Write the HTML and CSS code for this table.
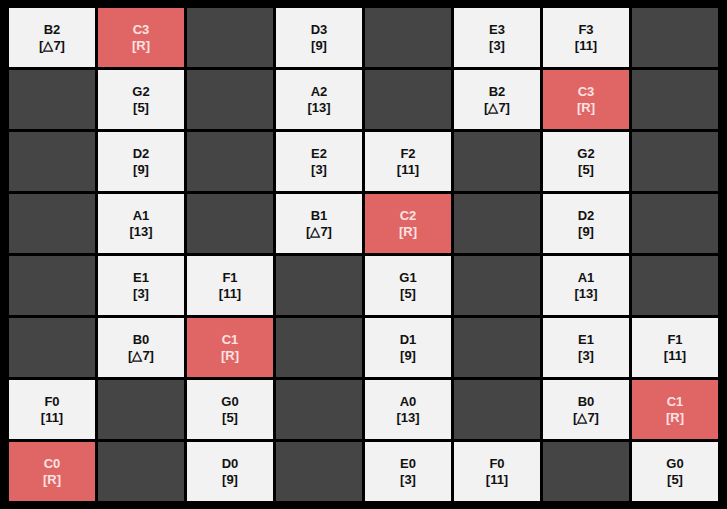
FILE: index.html
```html
<!DOCTYPE html>
<html>
<head>
<meta charset="utf-8">
<link rel="stylesheet" href="styles.css">
</head>
<body>
<div class="grid">
  <div class="cell light"><b>B2</b><span>[△7]</span></div>
  <div class="cell red"><b>C3</b><span>[R]</span></div>
  <div class="cell dark"></div>
  <div class="cell light"><b>D3</b><span>[9]</span></div>
  <div class="cell dark"></div>
  <div class="cell light"><b>E3</b><span>[3]</span></div>
  <div class="cell light"><b>F3</b><span>[11]</span></div>
  <div class="cell dark"></div>

  <div class="cell dark"></div>
  <div class="cell light"><b>G2</b><span>[5]</span></div>
  <div class="cell dark"></div>
  <div class="cell light"><b>A2</b><span>[13]</span></div>
  <div class="cell dark"></div>
  <div class="cell light"><b>B2</b><span>[△7]</span></div>
  <div class="cell red"><b>C3</b><span>[R]</span></div>
  <div class="cell dark"></div>

  <div class="cell dark"></div>
  <div class="cell light"><b>D2</b><span>[9]</span></div>
  <div class="cell dark"></div>
  <div class="cell light"><b>E2</b><span>[3]</span></div>
  <div class="cell light"><b>F2</b><span>[11]</span></div>
  <div class="cell dark"></div>
  <div class="cell light"><b>G2</b><span>[5]</span></div>
  <div class="cell dark"></div>

  <div class="cell dark"></div>
  <div class="cell light"><b>A1</b><span>[13]</span></div>
  <div class="cell dark"></div>
  <div class="cell light"><b>B1</b><span>[△7]</span></div>
  <div class="cell red"><b>C2</b><span>[R]</span></div>
  <div class="cell dark"></div>
  <div class="cell light"><b>D2</b><span>[9]</span></div>
  <div class="cell dark"></div>

  <div class="cell dark"></div>
  <div class="cell light"><b>E1</b><span>[3]</span></div>
  <div class="cell light"><b>F1</b><span>[11]</span></div>
  <div class="cell dark"></div>
  <div class="cell light"><b>G1</b><span>[5]</span></div>
  <div class="cell dark"></div>
  <div class="cell light"><b>A1</b><span>[13]</span></div>
  <div class="cell dark"></div>

  <div class="cell dark"></div>
  <div class="cell light"><b>B0</b><span>[△7]</span></div>
  <div class="cell red"><b>C1</b><span>[R]</span></div>
  <div class="cell dark"></div>
  <div class="cell light"><b>D1</b><span>[9]</span></div>
  <div class="cell dark"></div>
  <div class="cell light"><b>E1</b><span>[3]</span></div>
  <div class="cell light"><b>F1</b><span>[11]</span></div>

  <div class="cell light"><b>F0</b><span>[11]</span></div>
  <div class="cell dark"></div>
  <div class="cell light"><b>G0</b><span>[5]</span></div>
  <div class="cell dark"></div>
  <div class="cell light"><b>A0</b><span>[13]</span></div>
  <div class="cell dark"></div>
  <div class="cell light"><b>B0</b><span>[△7]</span></div>
  <div class="cell red"><b>C1</b><span>[R]</span></div>

  <div class="cell red"><b>C0</b><span>[R]</span></div>
  <div class="cell dark"></div>
  <div class="cell light"><b>D0</b><span>[9]</span></div>
  <div class="cell dark"></div>
  <div class="cell light"><b>E0</b><span>[3]</span></div>
  <div class="cell light"><b>F0</b><span>[11]</span></div>
  <div class="cell dark"></div>
  <div class="cell light"><b>G0</b><span>[5]</span></div>
</div>
</body>
</html>
```

FILE: styles.css
```css
html, body {
  margin: 0;
  background: #000;
}
body {
  padding: 8px 9px;
  font-family: "Liberation Sans", Arial, sans-serif;
}
.grid {
  display: grid;
  grid-template-columns: repeat(8, 86px);
  grid-template-rows: repeat(8, 59px);
  gap: 3px;
}
.cell {
  display: flex;
  flex-direction: column;
  align-items: center;
  justify-content: center;
  font-size: 13px;
  font-weight: bold;
  line-height: 16px;
}
.cell b, .cell span {
  display: block;
}
.light {
  background: #f2f2f2;
  color: #111;
}
.dark {
  background: #454545;
}
.red {
  background: #e06666;
  color: #fbe3e3;
}
```
